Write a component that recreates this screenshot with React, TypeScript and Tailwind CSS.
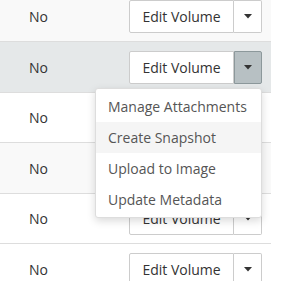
import React from 'react';

const Caret: React.FC = () => (
    <svg width="8" height="5" viewBox="0 0 8 5" className="block">
        <path d="M0 0 H8 L4 4.5 Z" fill="#333" />
    </svg>
);

const menuItems = ['Manage Attachments', 'Create Snapshot', 'Upload to Image', 'Update Metadata'];

const VolumeActions: React.FC<{ open?: boolean }> = ({ open }) => (
    <div className="relative ml-auto mr-[9px] flex h-[33px]">
        <button className="h-full w-[105px] rounded-l-[2px] border border-[#ccc] bg-white text-[14px] text-[#333]">
            Edit Volume
        </button>
        <button
            className={
                open
                    ? 'flex h-full w-[28px] items-center justify-center rounded-r-[2px] border border-[#8c989b] bg-[#b7c0c3]'
                    : 'flex h-full w-[28px] items-center justify-center rounded-r-[2px] border border-l-0 border-[#ccc] bg-white'
            }
        >
            <Caret />
        </button>
        {open && (
            <ul className="absolute right-0 top-[37px] z-10 w-[167px] rounded-[3px] border border-[#ddd] bg-white py-[2px] shadow-[0_3px_8px_rgba(0,0,0,0.15)]">
                {menuItems.map((item) => (
                    <li
                        key={item}
                        className={
                            item === 'Create Snapshot'
                                ? 'flex h-[31px] items-center bg-[#f5f5f5] pl-[12px] text-[14px] text-[#555]'
                                : 'flex h-[31px] items-center pl-[12px] text-[14px] text-[#555]'
                        }
                    >
                        {item}
                    </li>
                ))}
            </ul>
        )}
    </div>
);

const rows = [
    { h: 'h-[51px]', bg: 'bg-[#f9f9f9]' },
    { h: 'h-[51px]', bg: 'bg-[#e5e8e9]', open: true },
    { h: 'h-[50px]', bg: 'bg-white' },
    { h: 'h-[51px]', bg: 'bg-[#f9f9f9]' },
    { h: 'h-[50px]', bg: 'bg-white' },
    { h: 'h-[51px]', bg: 'bg-white' },
];

const App: React.FC = () => {
    return (
        <div className="h-[281px] w-[286px] overflow-hidden bg-white font-['Open_Sans',sans-serif]">
            <div className="-mt-[9px] w-[271px]">
                {rows.map((row, i) => (
                    <div
                        key={i}
                        className={`flex items-center border-b border-[#ddd] ${row.h} ${row.bg} ${row.open ? 'relative z-10' : ''}`}
                    >
                        <span className="pl-[29px] text-[14px] text-[#333]">No</span>
                        <VolumeActions open={row.open} />
                    </div>
                ))}
            </div>
        </div>
    );
};

export default App;
